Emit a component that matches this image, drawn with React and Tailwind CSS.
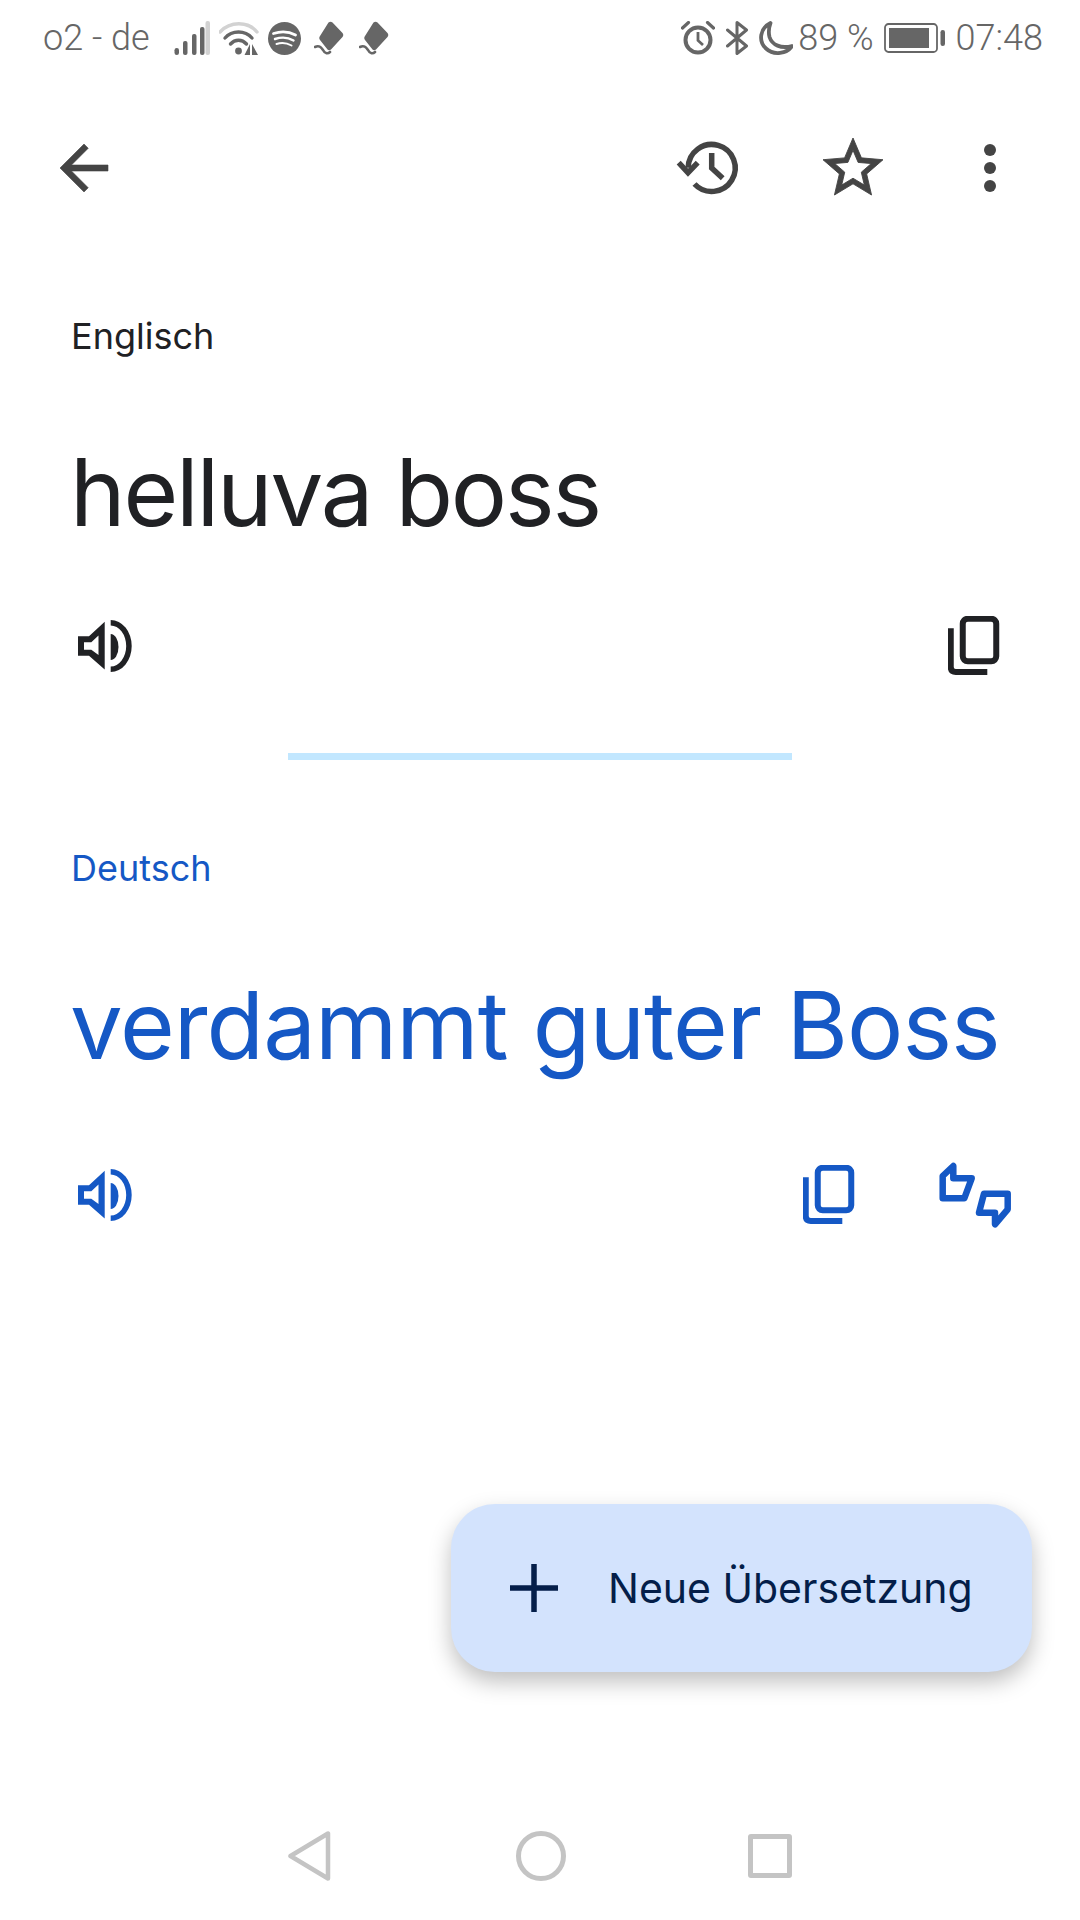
const statusFont = "font-['Roboto',sans-serif]"

function SignalIcon() {
  return (
    <svg width="36" height="34" viewBox="0 0 36 34" className="block">
      <rect x="0.5" y="27" width="4.5" height="7" rx="2.2" fill="#666" />
      <rect x="9" y="20" width="4.5" height="14" rx="2" fill="#666" />
      <rect x="18" y="13" width="4.5" height="21" rx="2" fill="#666" />
      <rect x="26" y="6" width="4.5" height="28" rx="2" fill="#666" />
      <rect x="31.5" y="0" width="4.5" height="34" rx="2" fill="#d2d2d2" />
    </svg>
  )
}

function WifiIcon() {
  return (
    <svg width="40" height="35" viewBox="0 0 40 35" fill="none" className="block">
      <path d="M1 11 C11 0 29 0 38 11" stroke="#d2d2d2" strokeWidth="3.4" strokeLinecap="round" />
      <path d="M6 17 C13 9 26 9 33 17" stroke="#666" strokeWidth="3.4" strokeLinecap="round" />
      <path d="M11.5 23 C16 18 23 18 27.5 23" stroke="#666" strokeWidth="3.4" strokeLinecap="round" />
      <circle cx="19.5" cy="30" r="3.4" fill="#666" />
      <path d="M31 23 V34 H25.5 Z M33 34 V23 L39 34 Z" fill="#666" />
    </svg>
  )
}

function SpotifyIcon() {
  return (
    <svg width="33" height="33" viewBox="0 0 33 33" fill="none" className="block">
      <circle cx="16.5" cy="16.5" r="16.5" fill="#666" />
      <path d="M5.5 11.5 C13 9 21 9.5 27.5 13" stroke="#fff" strokeWidth="2.8" strokeLinecap="round" />
      <path d="M7 17 C13 15 20.5 15.5 25.5 18.5" stroke="#fff" strokeWidth="2.4" strokeLinecap="round" />
      <path d="M8.5 22 C13 20.5 19 21 23.5 23.5" stroke="#fff" strokeWidth="2" strokeLinecap="round" />
    </svg>
  )
}

function DiamondIcon() {
  return (
    <svg width="30" height="35" viewBox="0 0 30 35" fill="none" className="block">
      <path d="M14.5 1.5 Q16.5 -0.2 18.5 1.5 L28.5 12 Q30 14 28.5 16 L17 28.5 Q15 30 13.5 28.5 L6 19 Q4.5 17 6 15 Z" fill="#666" />
      <path d="M1 26 C5 24 7 26 9 29 C11 33 14 33 16 31" stroke="#666" strokeWidth="2.6" strokeLinecap="round" />
    </svg>
  )
}

function AlarmIcon() {
  return (
    <svg width="34" height="34" viewBox="0 0 34 34" fill="none" className="block">
      <circle cx="17" cy="19" r="12.5" stroke="#666" strokeWidth="4" />
      <path d="M17 11 V19.5 L22 24" stroke="#666" strokeWidth="2.8" />
      <path d="M1.5 7 L7.5 1.5 M32.5 7 L26.5 1.5" stroke="#666" strokeWidth="3.2" strokeLinecap="round" />
    </svg>
  )
}

function BluetoothIcon() {
  return (
    <svg width="23" height="34" viewBox="0 0 23 34" fill="none" className="block">
      <path d="M1.5 9 L20.5 25 L11 32.5 V1.5 L20.5 9 L1.5 25" stroke="#666" strokeWidth="3" strokeLinejoin="round" strokeLinecap="round" />
    </svg>
  )
}

function MoonIcon() {
  return (
    <svg width="34" height="34" viewBox="0 0 34 34" fill="none" className="block">
      <path d="M11.5 2 C1 7 -1 20 7 27.5 C15 35 28 32.5 33 25 C22 28 13 24 10.5 16 C9 10 10 6 11.5 2 Z" stroke="#666" strokeWidth="3.8" strokeLinejoin="round" />
    </svg>
  )
}

function BatteryIcon() {
  return (
    <svg width="61" height="30" viewBox="0 0 61 30" fill="none" className="block">
      <rect x="1" y="1" width="52" height="28" rx="3.5" stroke="#666" strokeWidth="1.8" />
      <rect x="5" y="5" width="40" height="20" fill="#666" />
      <rect x="56.5" y="7" width="4.5" height="16" rx="2.2" fill="#666" />
    </svg>
  )
}

function BackIcon() {
  return (
    <svg width="72" height="72" viewBox="0 0 24 24" fill="#444" stroke="#444" strokeWidth="0.2" className="block">
      <path d="M20 11H7.83l5.59-5.59L12 4l-8 8 8 8 1.41-1.41L7.83 13H20v-2z" />
    </svg>
  )
}

function HistoryIcon() {
  return (
    <svg width="72" height="72" viewBox="0 0 72 72" fill="none" stroke="#444" strokeWidth="5.5" className="block">
      <path d="M21.5 52 A23.5 23.5 0 1 0 15.2 35.7" />
      <path d="M5.7 30.7 L15 40.7 L24.7 30.7" />
      <path d="M38.7 21 V36 L49.7 46.3" />
    </svg>
  )
}

function StarIcon() {
  return (
    <svg width="72" height="72" viewBox="0 0 24 24" fill="#444" stroke="#444" strokeWidth="0.3" className="block">
      <path d="M22 9.24l-7.19-.62L12 2 9.19 8.63 2 9.24l5.46 4.73L5.82 21 12 17.27 18.18 21l-1.63-7.03L22 9.24zM12 15.4l-3.76 2.27 1-4.28-3.32-2.88 4.38-.38L12 6.1l1.71 4.04 4.38.38-3.32 2.88 1 4.28L12 15.4z" />
    </svg>
  )
}

function DotsIcon() {
  return (
    <svg width="12" height="48" viewBox="0 0 12 48" fill="#444" className="block">
      <circle cx="6" cy="6" r="6" />
      <circle cx="6" cy="24" r="6" />
      <circle cx="6" cy="42" r="6" />
    </svg>
  )
}

function SpeakerIcon({ color }) {
  return (
    <svg width="54" height="52" viewBox="0 0 54 52" fill={color} className="block">
      <path fillRule="evenodd" d="M0 16.3 H11 L26.7 1.7 V49.5 L11 35.7 H0 Z M6 22.3 V29.7 H13.3 L20.5 35 V15.5 L13.3 22.3 Z" />
      <path d="M32.7 14 A7.5 12.5 0 0 1 32.7 40 Z" />
      <path d="M32.7 0 A21 26 0 0 1 32.7 52 V46.5 A15.5 20.5 0 0 0 32.7 5.5 Z" />
    </svg>
  )
}

function CopyIcon({ color }) {
  return (
    <svg width="52" height="60" viewBox="0 0 52 60" fill="none" stroke={color} strokeWidth="6" className="block">
      <rect x="14.75" y="2.75" width="33.5" height="42.5" rx="5" />
      <path d="M2.75 12.3 V51 Q2.75 56 7.75 56 H39.3" />
    </svg>
  )
}

function RateIcon({ color }) {
  return (
    <svg width="74" height="72" viewBox="0 0 74 72" fill="none" stroke={color} strokeWidth="6.5" strokeLinejoin="round" className="block">
      <path d="M4.7 17 L15.3 7 V19.3 H33.7 L26.3 39.3 H4.7 Z" />
      <path d="M69.7 34.7 V50.3 L57 65.3 V53.7 H41 L46 34.7 Z" />
    </svg>
  )
}

function NavBack() {
  return (
    <svg width="43" height="50" viewBox="0 0 43 50" fill="none" className="block">
      <path d="M40 2.5 V47.5 L2.5 25 Z" stroke="#c4c4c4" strokeWidth="4.5" strokeLinejoin="round" />
    </svg>
  )
}

export default function App() {
  return (
    <div className="flex h-[1920px] w-[1080px] flex-col overflow-hidden bg-white">
      {/* status bar */}
      <div className={`flex h-[75px] items-center pl-[43px] pr-[37px] pt-[1px] text-[36px] font-light leading-none text-[#666] ${statusFont}`}>
        <span className="mr-[24px]">o2 - de</span>
        <SignalIcon />
        <div className="ml-[9px]"><WifiIcon /></div>
        <div className="ml-[9px]"><SpotifyIcon /></div>
        <div className="ml-[13px]"><DiamondIcon /></div>
        <div className="ml-[15px]"><DiamondIcon /></div>
        <div className="ml-auto flex items-center">
          <AlarmIcon />
          <div className="ml-[11px]"><BluetoothIcon /></div>
          <div className="ml-[10px]"><MoonIcon /></div>
          <span className="ml-[5px]">89 %</span>
          <div className="ml-[10px]"><BatteryIcon /></div>
          <span className="ml-[11px]">07:48</span>
        </div>
      </div>

      {/* app bar */}
      <div className="mt-[57px] flex h-[72px] items-center pl-[48px] pr-[84px]">
        <BackIcon />
        <div className="ml-auto"><HistoryIcon /></div>
        <div className="ml-[72px]"><StarIcon /></div>
        <div className="ml-[95px]"><DotsIcon /></div>
      </div>

      {/* source */}
      <div className="pl-[73px] pr-[80px] font-['Inter',sans-serif]">
        <div className="ml-[-2px] mt-[110px] text-[36px] leading-[44px] text-[#202124]">Englisch</div>
        <div className="ml-[-3px] mt-[79px] text-[94px] leading-[110px] tracking-[-2.2px] text-[#202124]">helluva boss</div>
        <div className="mt-[69px] flex items-center justify-between">
          <div className="ml-[5px]"><SpeakerIcon color="#202124" /></div>
          <CopyIcon color="#202124" />
        </div>
      </div>

      <div className="mx-auto mt-[77px] h-[7px] w-[504px] bg-[#c2e7ff]" />

      {/* translation */}
      <div className="pl-[73px] pr-[68px] font-['Inter',sans-serif] text-[#1558c5]">
        <div className="ml-[-2px] mt-[86px] text-[36px] leading-[44px]">Deutsch</div>
        <div className="ml-[-3px] mt-[80px] whitespace-nowrap text-[94px] leading-[110px] tracking-[-1px]">verdammt guter Boss</div>
        <div className="mt-[79px] flex items-center">
          <div className="ml-[5px]"><SpeakerIcon color="#1558c5" /></div>
          <div className="ml-auto"><CopyIcon color="#1558c5" /></div>
          <div className="ml-[83px]"><RateIcon color="#1558c5" /></div>
        </div>
      </div>

      {/* fab */}
      <div className="mr-[48px] mt-[273px] flex h-[168px] w-[581px] items-center self-end rounded-[44px] bg-[#d3e3fd] pl-[59px] text-[#041e49] shadow-[0_10px_22px_rgba(0,0,0,0.25)]">
        <svg width="48" height="48" viewBox="0 0 48 48" className="block">
          <path d="M0 24 H48 M24 0 V48" stroke="#041e49" strokeWidth="5.5" />
        </svg>
        <span className="ml-[50px] font-['Inter',sans-serif] text-[41px] leading-none">Neue Übersetzung</span>
      </div>

      {/* nav bar */}
      <div className="mt-auto flex h-[117px] items-start justify-center pt-[28px]">
        <div className="mr-[185px]"><NavBack /></div>
        <div className="h-[50px] w-[50px] rounded-full border-[5px] border-[#c4c4c4]" />
        <div className="ml-[182px] mt-[3px] h-[44px] w-[44px] rounded-[3px] border-[5px] border-[#c4c4c4]" />
      </div>
    </div>
  )
}
